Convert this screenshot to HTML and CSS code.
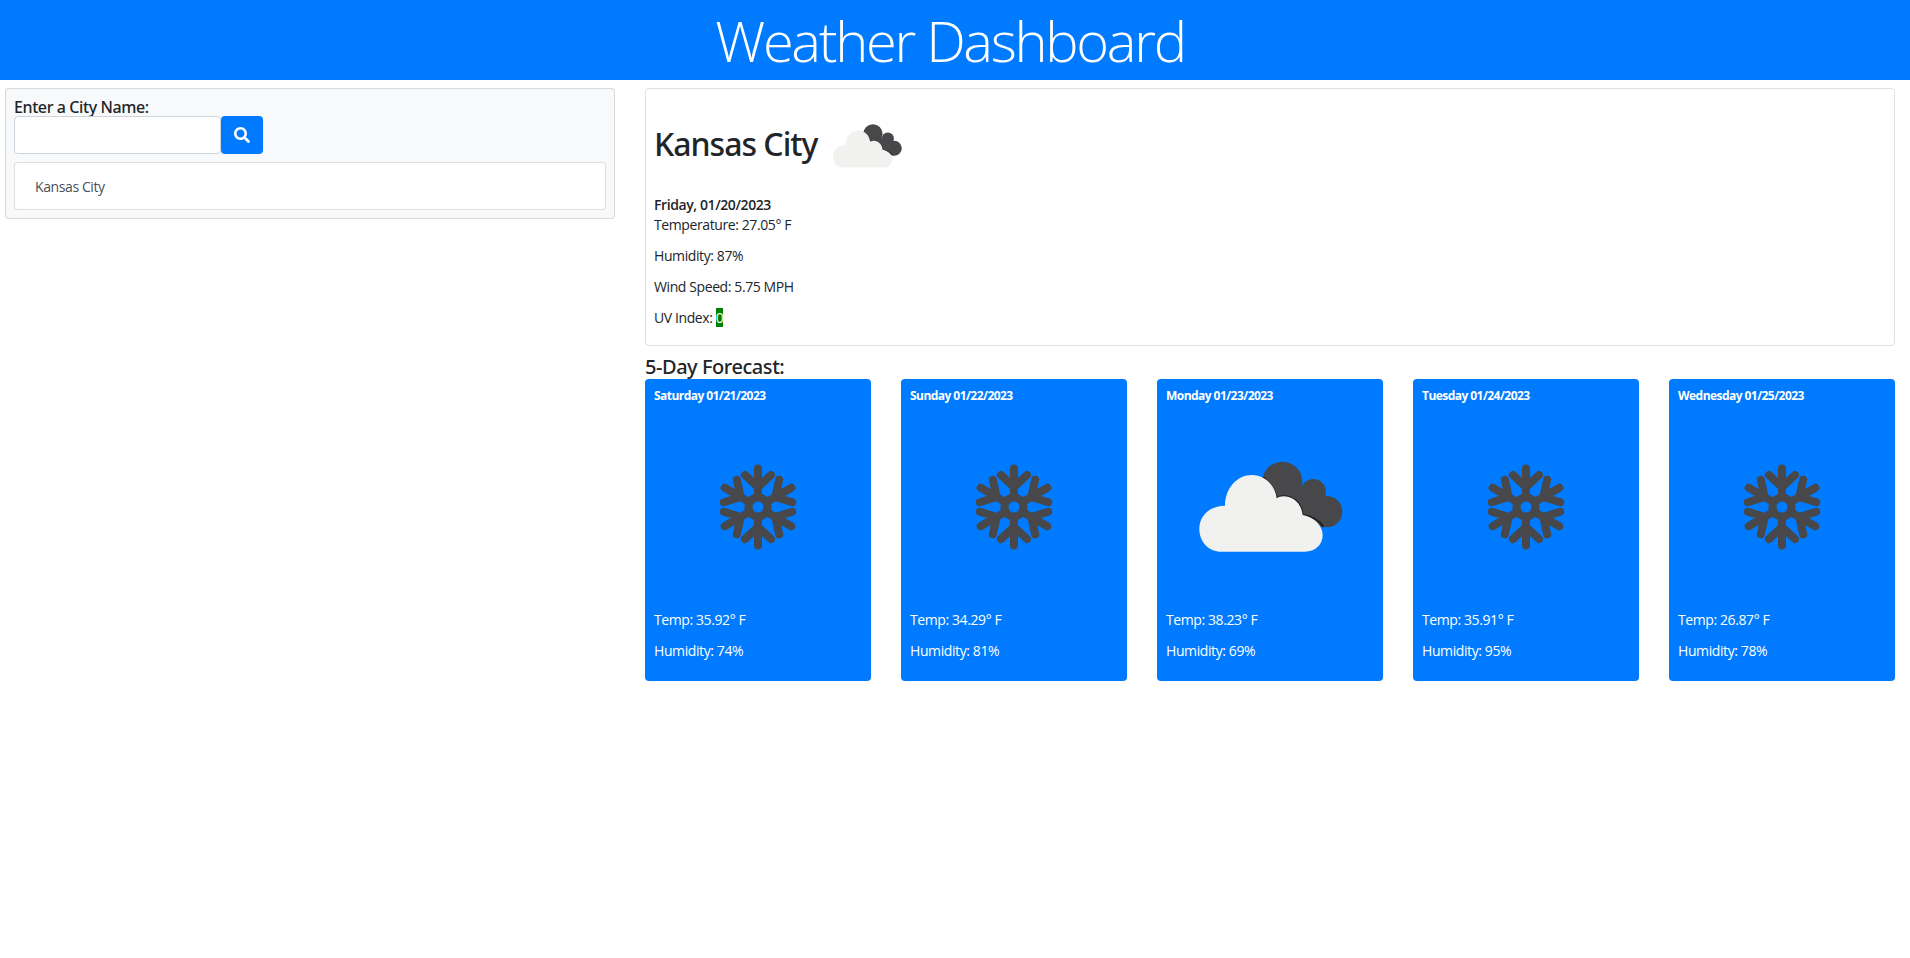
FILE: index.html
```html
<!DOCTYPE html>
<html lang="en">
<head>
  <meta charset="UTF-8">
  <title>Weather Dashboard</title>
  <link rel="stylesheet" href="styles.css">
</head>
<body>
  <svg class="defs" width="0" height="0">
    <symbol id="clouds" viewBox="48 99 624 624">
      <g fill="#48484a">
        <circle cx="397" cy="335" r="60"/>
        <circle cx="490" cy="365" r="38"/>
        <circle cx="530" cy="425" r="47"/>
        <path d="M340 320L520 385L530 470L400 420Z"/>
      </g>
      <path d="M340 322C360 340 375 360 380 385C395 372 450 375 458 435C490 440 510 455 520 470" fill="none" stroke="#222" stroke-width="6"/>
      <path fill="#f1f1f0" d="M215 545C175 545 148 515 148 476C148 437 180 407 225 407C225 355 262 315 305 315C345 315 375 345 380 385C395 372 450 375 458 435C490 440 518 465 518 495C518 525 495 545 465 545Z"/>
    </symbol>
    <symbol id="snow" viewBox="-104 -104 208 208">
      <g fill="none" stroke="#48484a" stroke-width="8" stroke-linecap="round" stroke-linejoin="round">
        <circle r="9.500"/>
        <g id="arm">
          <path d="M0-12V-38.500M-13-32L0-20L13-32"/>
        </g>
        <use href="#arm" transform="rotate(60)"/>
        <use href="#arm" transform="rotate(120)"/>
        <use href="#arm" transform="rotate(180)"/>
        <use href="#arm" transform="rotate(240)"/>
        <use href="#arm" transform="rotate(300)"/>
      </g>
    </symbol>
  </svg>

  <header class="banner">
    <h1>Weather Dashboard</h1>
  </header>

  <main class="layout">
    <section class="search-panel">
      <label for="city">Enter a City Name:</label>
      <div class="search-row">
        <input type="text" id="city">
        <button type="button" aria-label="Search">
          <svg viewBox="0 0 512 512" width="16" height="16"><path fill="#fff" d="M505 442.700L405.300 343c-4.500-4.500-10.600-7-17-7H372c27.600-35.300 44-79.700 44-128C416 93.100 322.900 0 208 0S0 93.100 0 208s93.100 208 208 208c48.300 0 92.700-16.400 128-44v16.300c0 6.400 2.500 12.500 7 17l99.700 99.700c9.400 9.400 24.600 9.400 33.900 0l28.300-28.300c9.400-9.400 9.400-24.600.1-34zM208 336c-70.700 0-128-57.200-128-128 0-70.700 57.200-128 128-128 70.700 0 128 57.200 128 128 0 70.700-57.200 128-128 128z"/></svg>
        </button>
      </div>
      <ul class="history">
        <li>Kansas City</li>
      </ul>
    </section>

    <section class="results">
      <div class="today">
        <div class="today-head">
          <h2>Kansas City</h2>
          <svg class="today-icon"><use href="#clouds"/></svg>
        </div>
        <div class="today-date">Friday, 01/20/2023</div>
        <p>Temperature: 27.05° F</p>
        <p>Humidity: 87%</p>
        <p>Wind Speed: 5.75 MPH</p>
        <p>UV Index: <span class="uv">0</span></p>
      </div>

      <h3>5-Day Forecast:</h3>
      <div class="forecast">
        <div class="day">
          <h4>Saturday 01/21/2023</h4>
          <svg class="day-icon"><use href="#snow"/></svg>
          <p>Temp: 35.92° F</p>
          <p>Humidity: 74%</p>
        </div>
        <div class="day">
          <h4>Sunday 01/22/2023</h4>
          <svg class="day-icon"><use href="#snow"/></svg>
          <p>Temp: 34.29° F</p>
          <p>Humidity: 81%</p>
        </div>
        <div class="day">
          <h4>Monday 01/23/2023</h4>
          <svg class="day-icon"><use href="#clouds"/></svg>
          <p>Temp: 38.23° F</p>
          <p>Humidity: 69%</p>
        </div>
        <div class="day">
          <h4>Tuesday 01/24/2023</h4>
          <svg class="day-icon"><use href="#snow"/></svg>
          <p>Temp: 35.91° F</p>
          <p>Humidity: 95%</p>
        </div>
        <div class="day">
          <h4>Wednesday 01/25/2023</h4>
          <svg class="day-icon"><use href="#snow"/></svg>
          <p>Temp: 26.87° F</p>
          <p>Humidity: 78%</p>
        </div>
      </div>
    </section>
  </main>
</body>
</html>
```

FILE: styles.css
```css
* {
  box-sizing: border-box;
}
body {
  margin: 0;
  font-family: "Open Sans", "Noto Sans", sans-serif;
  font-size: 14px;
  line-height: 21px;
  color: #212529;
  background-color: #fff;
}
p {
  margin: 0 0 10px;
  letter-spacing: -0.4px;
}
.defs {
  position: absolute;
}
.banner {
  height: 80px;
  padding-right: 10px;
  background-color: #007bff;
  color: #fff;
  text-align: center;
}
.banner h1 {
  margin: 0;
  font-size: 56px;
  font-weight: 300;
  line-height: 80px;
  letter-spacing: -2.3px;
}
.layout {
  display: grid;
  grid-template-columns: 610px 1fr;
  gap: 30px;
  padding: 8px 15px 0 5px;
  align-items: start;
}
.search-panel {
  padding: 8px;
  background-color: #f8f9fa;
  border: 1px solid rgba(0, 0, 0, .125);
  border-radius: 4px;
}
.search-panel label {
  display: block;
  font-family: "Noto Sans", sans-serif;
  font-size: 16px;
  font-weight: 500;
  line-height: 21px;
  margin-bottom: -2px;
  letter-spacing: -0.4px;
}
.search-row {
  display: flex;
}
.search-row input {
  width: 207px;
  height: 38px;
  padding: 6px 12px;
  border: 1px solid #ced4da;
  border-radius: 4px;
  background-color: #fff;
}
.search-row button {
  width: 42px;
  height: 38px;
  display: flex;
  align-items: center;
  justify-content: center;
  padding: 0;
  border: none;
  border-radius: 4px;
  background-color: #007bff;
}
.history {
  list-style: none;
  margin: 8px 0 0;
  padding: 13px 20px;
  height: 48px;
  background-color: #fff;
  border: 1px solid rgba(0, 0, 0, .125);
  border-radius: 4px;
  color: #495057;
  letter-spacing: -0.4px;
}
.today {
  height: 258px;
  padding: 8px;
  border: 1px solid rgba(0, 0, 0, .125);
  border-radius: 4px;
}
.today-head {
  display: flex;
  align-items: center;
  height: 98px;
}
.today-head h2 {
  width: 163px;
  margin: 0 0 5px;
  font-family: "Noto Sans", sans-serif;
  font-size: 32px;
  font-weight: 500;
  line-height: 38px;
  letter-spacing: -1px;
  white-space: nowrap;
}
.today-icon {
  width: 100px;
  height: 100px;
  flex: none;
}
.today-date {
  font-weight: 600;
  line-height: 19px;
  letter-spacing: -0.4px;
}
.uv {
  background-color: green;
  color: #fff;
}
h3 {
  margin: 9px 0 0;
  font-family: "Noto Sans", sans-serif;
  font-size: 20px;
  font-weight: 500;
  line-height: 24px;
  letter-spacing: -0.45px;
}
.forecast {
  display: grid;
  grid-template-columns: repeat(5, 226px);
  justify-content: space-between;
}
.day {
  height: 302px;
  padding: 9px;
  background-color: #007bff;
  border-radius: 4px;
  color: #fff;
}
.day h4 {
  margin: 0;
  font-size: 12px;
  font-weight: 700;
  line-height: 15px;
  letter-spacing: -0.55px;
}
.day-icon {
  display: block;
  width: 208px;
  height: 208px;
  margin-bottom: -2px;
}
```
